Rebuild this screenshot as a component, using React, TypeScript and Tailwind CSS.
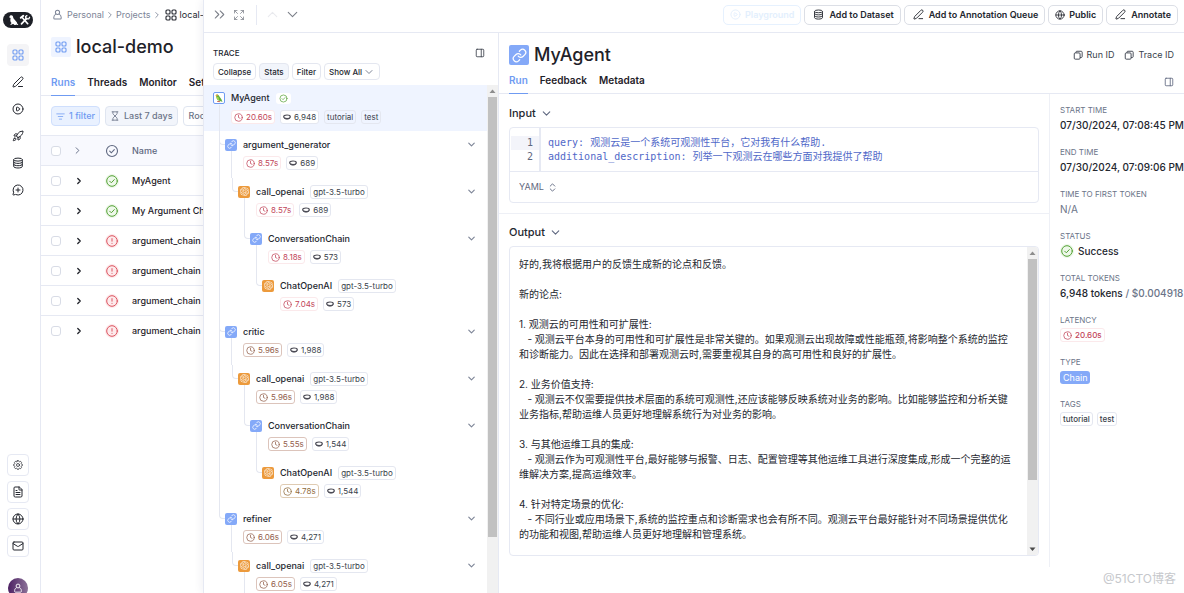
import React from 'react';
import clsx from 'clsx';
import {
  ChevronDown,
  ChevronRight,
  ChevronsRight,
  ChevronsUpDown,
  ChevronUp,
  CirclePlay,
  Clock,
  Expand,
  FileText,
  Globe,
  Hourglass,
  Link,
  ListFilter,
  Mail,
  MessageCirclePlus,
  PanelRight,
  PenLine,
  Rocket,
} from 'lucide-react';
import { HiOutlineCog8Tooth } from 'react-icons/hi2';
import { SiOpenai } from 'react-icons/si';

type LatencyTone = 'red' | 'brown' | 'amber';

interface TraceNode {
  name: string;
  kind: 'chain' | 'llm';
  model?: string;
  latency: string;
  tone: LatencyTone;
  tokens: string;
  children?: TraceNode[];
}

const TRACE: TraceNode[] = [
  {
    name: 'argument_generator', kind: 'chain', latency: '8.57s', tone: 'red', tokens: '689',
    children: [
      {
        name: 'call_openai', kind: 'llm', model: 'gpt-3.5-turbo', latency: '8.57s', tone: 'red', tokens: '689',
        children: [
          {
            name: 'ConversationChain', kind: 'chain', latency: '8.18s', tone: 'red', tokens: '573',
            children: [
              { name: 'ChatOpenAI', kind: 'llm', model: 'gpt-3.5-turbo', latency: '7.04s', tone: 'red', tokens: '573' },
            ],
          },
        ],
      },
    ],
  },
  {
    name: 'critic', kind: 'chain', latency: '5.96s', tone: 'brown', tokens: '1,988',
    children: [
      {
        name: 'call_openai', kind: 'llm', model: 'gpt-3.5-turbo', latency: '5.96s', tone: 'brown', tokens: '1,988',
        children: [
          {
            name: 'ConversationChain', kind: 'chain', latency: '5.55s', tone: 'brown', tokens: '1,544',
            children: [
              { name: 'ChatOpenAI', kind: 'llm', model: 'gpt-3.5-turbo', latency: '4.78s', tone: 'amber', tokens: '1,544' },
            ],
          },
        ],
      },
    ],
  },
  {
    name: 'refiner', kind: 'chain', latency: '6.06s', tone: 'brown', tokens: '4,271',
    children: [
      {
        name: 'call_openai', kind: 'llm', model: 'gpt-3.5-turbo', latency: '6.05s', tone: 'brown', tokens: '4,271',
        children: [
          { name: 'ConversationChain', kind: 'chain', latency: '5.71s', tone: 'brown', tokens: '2,310' },
        ],
      },
    ],
  },
];

const RUNS = [
  { name: 'MyAgent', ok: true },
  { name: 'My Argument Chain', ok: true },
  { name: 'argument_chain', ok: false },
  { name: 'argument_chain', ok: false },
  { name: 'argument_chain', ok: false },
  { name: 'argument_chain', ok: false },
];

const OUTPUT = `好的,我将根据用户的反馈生成新的论点和反馈。

新的论点:

1. 观测云的可用性和可扩展性:
   - 观测云平台本身的可用性和可扩展性是非常关键的。如果观测云出现故障或性能瓶颈,将影响整个系统的监控和诊断能力。因此在选择和部署观测云时,需要重视其自身的高可用性和良好的扩展性。

2. 业务价值支持:
   - 观测云不仅需要提供技术层面的系统可观测性,还应该能够反映系统对业务的影响。比如能够监控和分析关键业务指标,帮助运维人员更好地理解系统行为对业务的影响。

3. 与其他运维工具的集成:
   - 观测云作为可观测性平台,最好能够与报警、日志、配置管理等其他运维工具进行深度集成,形成一个完整的运维解决方案,提高运维效率。

4. 针对特定场景的优化:
   - 不同行业或应用场景下,系统的监控重点和诊断需求也会有所不同。观测云平台最好能针对不同场景提供优化的功能和视图,帮助运维人员更好地理解和管理系统。`;

/* ---------- Icons ---------- */

const PersonIcon = ({ className }: { className?: string }) => (
  <svg viewBox="0 0 12 12" fill="none" stroke="currentColor" strokeWidth="1.1" strokeLinejoin="round" className={className}>
    <circle cx="6" cy="3.6" r="2.3" />
    <path d="M4.3 5.6C2.9 6.2 2 7.5 2 9v1.2c0 .4.3.8.8.8h6.4c.5 0 .8-.4.8-.8V9c0-1.5-.9-2.8-2.3-3.4" />
  </svg>
);

const GridIcon = ({ className }: { className?: string }) => (
  <svg viewBox="0 0 12 12" fill="none" stroke="currentColor" strokeWidth="1.1" className={className}>
    <rect x="1" y="1" width="4" height="4" rx="1" />
    <rect x="7" y="1" width="4" height="4" rx="1" />
    <rect x="1" y="7" width="4" height="4" rx="1" />
    <rect x="7" y="7" width="4" height="4" rx="1" />
  </svg>
);

const DatabaseIcon = ({ className }: { className?: string }) => (
  <svg viewBox="0 0 12 12" fill="none" stroke="currentColor" className={className}>
    <ellipse cx="6" cy="2.6" rx="4.3" ry="1.5" />
    <path d="M1.700 2.600v6.900c0 .8 1.900 1.500 4.300 1.500s4.300-.7 4.300-1.500V2.600M1.700 4.900c0 .8 1.900 1.500 4.300 1.500s4.300-.7 4.300-1.500M1.700 7.200c0 .8 1.900 1.500 4.300 1.500s4.300-.7 4.300-1.500" />
  </svg>
);

const StackIcon = () => (
  <svg viewBox="0 0 12 12" fill="none" stroke="currentColor" strokeWidth="1.1" strokeLinejoin="round" className="size-[10px]">
    <rect x="1.5" y="3.5" width="7" height="7.5" rx="1.2" />
    <path d="M3.5 3.5V2.6c0-.6.5-1.1 1.1-1.1h5.3c.6 0 1.1.5 1.1 1.1v5.3c0 .6-.5 1.1-1.1 1.1H8.5" />
  </svg>
);

const TokenIcon = () => (
  <svg viewBox="0 0 8 6" fill="none" stroke="#4b4b55" className="h-[6px] w-[8px] shrink-0">
    <ellipse cx="4" cy="2.8" rx="3.3" ry="1.8" strokeWidth="1.2" />
    <path d="M1.200 4.200c.6.5 1.600.8 2.800.8s2.200-.3 2.800-.8" strokeWidth="1" />
  </svg>
);

const LogoIcon = () => (
  <svg viewBox="0 0 30 16" className="h-4 w-[30px]">
    <rect width="30" height="16" rx="8" fill="#1c1f26" />
    {/* parrot */}
    <path d="M6.500 4.500C7 3 9.200 2.800 9.900 4.200l.5 2 3.400 4c.3.500.4 1 .3 1.400l1.300.9-.9.600-1.500-.7-.3.700h-1.300l-.6-.8-1-.2-1.900.9-.6-.4 1.300-1.500C7.400 9.900 7.200 8.500 7.400 7.400L7.600 6l-1.300-.6z" fill="#fff" />
    {/* crossed tools */}
    <g stroke="#fff" strokeLinecap="round">
      <path d="M18.500 11.800l5.200-5.400" strokeWidth="1.700" />
      <path d="M19.700 6l5 5.700" strokeWidth="1.700" />
      <path d="M17.800 5.800l2.500-2" strokeWidth="2" />
      <path d="M22.800 6.500l-.2-2 1.300-.9M23.900 6.900l1.900-.1.800-1.500" strokeWidth="1.300" fill="none" />
    </g>
  </svg>
);

const ParrotIcon = () => (
  <svg viewBox="0 0 12 12" className="size-[12px] shrink-0">
    <rect x="0.5" y="0.5" width="11" height="11" rx="1.5" fill="#fff" stroke="#6f9bf2" />
    <path d="M3 3.400C3.200 2.200 5 2.100 5.600 3.200l2.800 4 1.100 2.900-2.200-1.200C5 9 3.500 7.200 3.300 5z" fill="#5fae3f" />
    <path d="M2.600 3.900c0-1.300 1.400-1.800 2.400-1l-.9 1.500z" fill="#e0a63a" />
    <path d="M3.500 5c.2 1.800 1.100 3 2.600 3.600L5.500 5z" fill="#a8d545" />
    <path d="M4.200 9.400l3 .3" stroke="#c9523d" strokeWidth=".9" />
  </svg>
);

const StatusIcon = ({ ok, className }: { ok: boolean; className?: string }) => (
  <svg
    viewBox="0 0 14 14"
    fill="none"
    strokeLinecap="round"
    strokeLinejoin="round"
    className={clsx('size-[14px] shrink-0', className)}
  >
    <circle cx="7" cy="7" r="7" fill={ok ? '#eef8ea' : '#fdeaec'} />
    <circle cx="7" cy="7" r="5.3" stroke={ok ? '#55a236' : '#dc5560'} />
    {ok ? (
      <path d="M4.700 7.200l1.600 1.600 3-3.200" stroke="#55a236" />
    ) : (
      <path d="M7 4.600v2.600M7 9.300v.1" stroke="#dc5560" />
    )}
  </svg>
);

const CheckCircle = ({ className }: { className?: string }) => (
  <svg viewBox="0 0 14 14" fill="none" stroke="currentColor" strokeWidth="1.1" strokeLinecap="round" className={className}>
    <circle cx="7" cy="7" r="5.5" />
    <path d="M4.700 7.200l1.600 1.600 3-3.200" />
  </svg>
);

const KindIcon = ({ kind }: { kind: 'chain' | 'llm' }) => (
  <span
    className={clsx(
      'flex size-[12px] shrink-0 items-center justify-center rounded-[2px] text-white',
      kind === 'chain' ? 'bg-[#84a9f8]' : 'bg-[#ec9a3c]',
    )}
  >
    {kind === 'chain' ? <Link className="size-[9px]" strokeWidth={2} /> : <SiOpenai className="size-[9px] opacity-90" />}
  </span>
);

/* ---------- Small parts ---------- */

const Chip = ({ className, children }: { className?: string; children: React.ReactNode }) => (
  <span
    className={clsx(
      'inline-flex h-[14px] shrink-0 items-center gap-[3px] rounded-[3px] border px-[2px] text-[8px] leading-[10px]',
      className ?? 'border-[#e4e7f0] text-[#3a3f4b]',
    )}
  >
    {children}
  </span>
);

const LatencyChip = ({ value, tone }: { value: string; tone: LatencyTone }) => (
  <Chip
    className={clsx(
      tone === 'red' && 'border-[#fbe9eb] bg-white text-[#c2455a]',
      tone === 'brown' && 'border-[#dcc4bb] bg-white text-[#93604c]',
      tone === 'amber' && 'border-[#dfcbb2] bg-white text-[#8f6b3c]',
    )}
  >
    <Clock className="size-[9px]" strokeWidth={2} />
    {value}
  </Chip>
);

const TokenChip = ({ value }: { value: string }) => (
  <Chip className="border-[#e4e7f0] bg-white text-[#3a3f4b]">
    <TokenIcon />
    {value}
  </Chip>
);

const Scrollbar = ({ thumb, down }: { thumb: string; down?: boolean }) => (
  <div className="flex w-[11px] shrink-0 flex-col items-center bg-[#f1f1f1]" aria-hidden="true">
    <svg viewBox="0 0 11 12" className="h-3 w-[11px] shrink-0"><path d="M2.500 8h6l-3-3.500z" fill="#8d8d8d" /></svg>
    <div className="min-h-0 w-full flex-1 px-px">
      <div className={clsx('w-full bg-[#c1c1c1]', thumb)} />
    </div>
    {down && <svg viewBox="0 0 11 12" className="h-3 w-[11px] shrink-0"><path d="M2.500 4.500h6l-3 3.500z" fill="#4a4a4a" /></svg>}
  </div>
);

/* ---------- Left side ---------- */

const NAV = [
  { label: 'Projects', icon: GridIcon },
  { label: 'Annotation queues', icon: PenLine },
  { label: 'Playground', icon: CirclePlay },
  { label: 'Deployments', icon: Rocket },
  { label: 'Datasets', icon: DatabaseIcon },
  { label: 'Prompts', icon: MessageCirclePlus },
];

const BOTTOM_NAV = [
  { label: 'Settings', icon: HiOutlineCog8Tooth },
  { label: 'Docs', icon: FileText },
  { label: 'Language', icon: Globe },
  { label: 'Contact', icon: Mail },
];

const Sidebar = () => (
  <nav className="flex w-[41px] shrink-0 flex-col border-r border-[#e6e9f3] pr-1 text-[#24272f]">
    <a href="#" aria-label="Home" className="mt-3 flex justify-center">
      <LogoIcon />
    </a>
    <div className="mt-4 flex flex-col items-center gap-[5px]">
      {NAV.map(({ label, icon: Icon }, i) => (
        <a
          key={label}
          href="#"
          aria-label={label}
          className={clsx(
            'flex size-[22px] items-center justify-center rounded-[4px]',
            i === 0 && 'bg-[#f4f4f6] text-[#6f9bf2]',
          )}
        >
          <Icon className="size-[12px]" />
        </a>
      ))}
    </div>
    <div className="mt-auto -mb-[5px] flex flex-col items-center gap-[5px]">
      {BOTTOM_NAV.map(({ label, icon: Icon }) => (
        <a
          key={label}
          href="#"
          aria-label={label}
          className="flex size-[22px] items-center justify-center rounded-[4px] border border-[#e6e9f3]"
        >
          <Icon className="size-[12px]" />
        </a>
      ))}
      <button
        aria-label="Account"
        className="mt-4 flex size-5 items-center justify-center rounded-full bg-gradient-to-r from-[#4d2063] to-[#8d7399] text-white"
      >
        <PersonIcon className="size-[10px]" />
      </button>
    </div>
  </nav>
);

const RunsPage = () => (
  <div className="w-[162px] shrink-0 overflow-hidden whitespace-nowrap text-[#1f2229]">
    <div className="flex items-center px-[11px] pt-2 text-[9px] leading-[13px] text-[#7d8597]">
      <PersonIcon className="mr-1 size-[11px] shrink-0" />
      <a href="#">Personal</a>
      <ChevronRight className="mx-px size-[10px] shrink-0" />
      <a href="#">Projects</a>
      <ChevronRight className="mx-px size-[10px] shrink-0" />
      <GridIcon className="mr-[3px] ml-[2px] size-[12px] shrink-0 text-[#24272f]" />
      <span className="text-[#24272f]">local-demo</span>
    </div>

    <div className="mt-4 flex h-5 items-center gap-[5px] px-[10px]">
      <span className="flex size-5 items-center justify-center rounded-[2px] bg-[#eff4ff] text-[#6f9bf2]">
        <GridIcon className="size-[12px]" />
      </span>
      <h1 className="text-[18px] leading-5 font-medium">local-demo</h1>
    </div>

    <div className="mt-[18px] flex gap-3 border-b border-[#e6e9f3] px-[10px] text-[10px] leading-[14px] font-semibold">
      <button className="-mb-px border-b border-[#6f9bf2] pb-[6px] text-[#6f9bf2]">Runs</button>
      <button className="pb-[6px]">Threads</button>
      <button className="pb-[6px]">Monitor</button>
      <button className="pb-[6px]">Setup</button>
    </div>

    <div className="flex gap-[5px] px-[10px] pt-[10px] pb-[9px] text-[9px] leading-3 font-medium">
      <button className="flex h-5 shrink-0 items-center gap-1 rounded-[4px] border border-[#cfdffd] bg-[#e9f1ff] px-[4px] text-[#6f9bf2]">
        <ListFilter className="size-[9px]" />1 filter
      </button>
      <button className="flex h-5 shrink-0 items-center gap-1 rounded-[4px] border border-[#dfe5f0] bg-[#f2f5fb] px-1 text-[#6b7488]">
        <Hourglass className="size-[10px]" />Last 7 days
      </button>
      <button className="flex h-5 shrink-0 items-center rounded-[4px] border border-[#dfe5f0] px-[5px] text-[#6b7488]">
        Root Runs
      </button>
    </div>

    <table className="w-[220px] table-fixed border-t border-[#e6e9f3] text-left text-[9px] leading-3">
      <thead>
        <tr className="h-[30px] border-b border-[#e6e9f3] bg-[#f8f9fe] text-[#5f6880]">
          <th className="w-[30px] pl-[10px]">
            <input type="checkbox" aria-label="Select all" className="block size-[10px] appearance-none rounded-[3px] border border-[#d8dce6] bg-white" />
          </th>
          <th className="w-[34px]"><ChevronRight className="ml-px size-[11px]" /></th>
          <th className="w-[27px]"><CheckCircle className="size-[14px]" /></th>
          <th className="font-medium">Name</th>
        </tr>
      </thead>
      <tbody>
        {RUNS.map((run, i) => (
          <tr key={i} className="h-[30px] border-b border-[#e6e9f3] last:border-b-0">
            <td className="pl-[10px]">
              <input type="checkbox" aria-label={run.name} className="block size-[10px] appearance-none rounded-[3px] border border-[#d8dce6] bg-white" />
            </td>
            <td><ChevronRight className="ml-[3px] size-[10px]" strokeWidth={3} /></td>
            <td><StatusIcon ok={run.ok} /></td>
            <td className="font-medium">{run.name}</td>
          </tr>
        ))}
      </tbody>
    </table>
  </div>
);

/* ---------- Trace panel ---------- */

const INDENT = ['pl-[12px]', 'pl-[13px]', 'pl-[12px]', 'pl-[12px]'];

const TraceTree = ({ nodes, depth = 0 }: { nodes: TraceNode[]; depth?: number }) => (
  <ul className={INDENT[depth]}>
    {nodes.map((node, i) => (
      <li key={i} className="relative">
        {/* connector */}
        <span className="absolute top-0 -left-[6px] h-[14px] w-[6px] rounded-bl-[4px] border-b border-l border-[#e4e7f0]" />
        {i < nodes.length - 1 && <span className="absolute top-0 bottom-0 -left-[6px] border-l border-[#e4e7f0]" />}
        <div className={clsx('relative', node.children ? 'h-[47px]' : 'h-[46px]')}>
          {node.children && <span className="absolute top-5 bottom-0 left-[6px] border-l border-[#e4e7f0]" />}
          <div className="flex h-[25px] items-center gap-[6px] pt-[2px] pr-[10px]">
            <KindIcon kind={node.kind} />
            <span className="text-[9px] leading-3 font-medium text-[#24272f]">{node.name}</span>
            {node.model && <Chip>{node.model}</Chip>}
            {node.children && (
              <button aria-label={`Toggle ${node.name}`} className="ml-auto text-[#7d8597]">
                <ChevronDown className="size-[11px]" strokeWidth={2.5} />
              </button>
            )}
          </div>
          <div className="flex gap-[5px] pl-[18px]">
            <LatencyChip value={node.latency} tone={node.tone} />
            <TokenChip value={node.tokens} />
          </div>
        </div>
        {node.children && <TraceTree nodes={node.children} depth={depth + 1} />}
      </li>
    ))}
  </ul>
);

const TracePanel = () => (
  <section className="flex w-[295px] shrink-0 flex-col border-r border-[#e6e9f3]">
    <div className="flex items-center justify-between pt-[14px] pr-[13px] pl-[9px]">
      <h2 className="text-[8px] leading-3 font-medium text-[#24272f]">TRACE</h2>
      <button aria-label="Toggle panel" className="text-[#3a3f4b]"><PanelRight className="size-[10px]" /></button>
    </div>
    <div className="flex gap-[3px] pt-1 pb-[5px] pl-[9px] text-[8px] leading-[10px] font-medium text-[#24272f]">
      <button className="h-[17px] rounded-[4px] border border-[#e4e7f0] px-1">Collapse</button>
      <button className="h-[17px] rounded-[4px] border border-[#e4e7f0] bg-[#f2f5fb] px-1">Stats</button>
      <button className="h-[17px] rounded-[4px] border border-[#e4e7f0] px-1">Filter</button>
      <label className="flex h-[17px] items-center rounded-[4px] border border-[#e4e7f0] px-1">
        <select aria-label="Visible runs" className="appearance-none bg-transparent">
          <option>Show All</option>
        </select>
        <ChevronDown className="size-[12px] text-[#7d8597]" />
      </label>
    </div>

    <div className="flex min-h-0 flex-1">
      <div className="min-w-0 flex-1 overflow-hidden">
        <div className="relative h-[46px] bg-[#eff4ff] pl-[9px]">
          <span className="absolute top-5 bottom-0 left-[15px] border-l border-[#e4e7f0]" />
          <div className="flex h-[25px] items-center gap-[6px] pt-px">
            <ParrotIcon />
            <span className="text-[9px] leading-3 font-medium text-[#24272f]">MyAgent</span>
            <span className="flex h-[11px] items-center rounded-[3px] bg-white px-[3px] text-[#55a236]">
              <CheckCircle className="size-[9px]" />
            </span>
          </div>
          <div className="flex gap-[5px] pl-[18px]">
            <LatencyChip value="20.60s" tone="red" />
            <TokenChip value="6,948" />
            <Chip>tutorial</Chip>
            <Chip>test</Chip>
          </div>
        </div>
        <div className="pl-[9px]">
          <TraceTree nodes={TRACE} />
        </div>
      </div>
      <Scrollbar thumb="h-[440px]" />
    </div>
  </section>
);

/* ---------- Run detail ---------- */

const Field = ({ label, children }: { label: string; children: React.ReactNode }) => (
  <div>
    <dt className="text-[8px] leading-[10px] text-[#6b7488] uppercase">{label}</dt>
    <dd className="mt-[2px] flex h-4 items-center gap-1 text-[10px] leading-4 font-medium text-[#24272f]">{children}</dd>
  </div>
);

const Details = () => (
  <dl className="flex w-[135px] shrink-0 flex-col gap-[14px] self-start overflow-hidden border-l border-[#eef0f6] pt-[11px] pb-[140px] pl-[10px] whitespace-nowrap">
    <Field label="Start time">07/30/2024, 07:08:45 PM</Field>
    <Field label="End time">07/30/2024, 07:09:06 PM</Field>
    <Field label="Time to first token"><span className="font-normal text-[#6b7488]">N/A</span></Field>
    <Field label="Status"><StatusIcon ok />Success</Field>
    <Field label="Total tokens">
      <span>6,948 tokens <span className="text-[#6b7488]">/ $0.004918</span></span>
    </Field>
    <Field label="Latency"><LatencyChip value="20.60s" tone="red" /></Field>
    <Field label="Type">
      <span className="rounded-[3px] bg-[#84a9f8] px-[3px] text-[9px] leading-[13px] font-normal text-white">Chain</span>
    </Field>
    <Field label="Tags"><Chip>tutorial</Chip><Chip>test</Chip></Field>
  </dl>
);

const SectionTitle = ({ children }: { children: React.ReactNode }) => (
  <h3 className="flex items-center gap-[4px] text-[11px] leading-4 font-medium text-[#24272f]">
    {children}
    <ChevronDown className="size-[13px] text-[#5f6880]" strokeWidth={2} />
  </h3>
);

const RunDetail = () => (
  <section className="flex min-w-0 flex-1 flex-col">
    <header className="border-b border-[#e6e9f3] pr-[10px] pl-[10px]">
      <div className="flex items-center justify-between pt-3">
        <div className="flex items-center gap-[5px]">
          <span className="flex size-5 items-center justify-center rounded-[2px] bg-[#84a9f8] text-white">
            <Link className="size-[15px]" strokeWidth={2} />
          </span>
          <h1 className="text-[18px] leading-5 font-medium text-[#1f2229]">MyAgent</h1>
        </div>
        <div className="flex gap-[10px] text-[9px] leading-3 text-[#3a3f4b]">
          <button className="flex items-center gap-1"><StackIcon />Run ID</button>
          <button className="flex items-center gap-1"><StackIcon />Trace ID</button>
        </div>
      </div>
      <div className="flex items-start pt-2 text-[10px] leading-[14px] font-semibold text-[#1f2229]">
        <button className="-mb-px border-b border-[#6f9bf2] pb-[6px] text-[#6f9bf2]">Run</button>
        <button className="ml-3">Feedback</button>
        <button className="ml-3">Metadata</button>
        <button aria-label="Toggle details" className="mt-1 ml-auto text-[#5f6880]"><PanelRight className="size-[10px]" /></button>
      </div>
    </header>

    <div className="flex min-h-0 flex-1">
      <div className="min-w-0 flex-1">
        <div className="border-b border-[#eef0f6] px-[10px] pt-[11px] pb-[10px]">
          <SectionTitle>Input</SectionTitle>
          <div className="mt-[6px] rounded-[4px] border border-[#e6e9f3]">
            <div className="flex border-b border-[#e6e9f3] font-['DejaVu_Sans_Mono','Noto_Sans_CJK_SC',monospace] text-[10px] leading-[14px]">
              <div className="w-[31px] border-r-2 border-[#e6e9f3] pt-2 pb-[7px] pl-px text-right text-[#5f6880]">
                <div className="bg-[#f3f4fa] pr-[6px]">1</div>
                <div className="pr-[6px]">2</div>
              </div>
              <div className="min-w-0 flex-1 pt-2 pl-[7px] text-[#5068c8]">
                <div>query: 观测云是一个系统可观测性平台，它对我有什么帮助.</div>
                <div>additional_description: 列举一下观测云在哪些方面对我提供了帮助</div>
              </div>
            </div>
            <label className="inline-flex h-[30px] items-center gap-[3px] pl-[9px] text-[9px] leading-3 text-[#5f6880]">
              <select aria-label="Format" className="appearance-none bg-transparent">
                <option>YAML</option>
              </select>
              <ChevronsUpDown className="size-[11px]" />
            </label>
          </div>
        </div>

        <div className="px-[10px] pt-[10px]">
          <SectionTitle>Output</SectionTitle>
          <div className="mt-[6px] flex h-[310px] overflow-hidden rounded-[4px] border border-[#e6e9f3]">
            <p className="min-w-0 flex-1 py-[10px] pr-3 pl-[9px] text-[10px] leading-[15px] whitespace-pre-wrap text-[#24272f]">
              {OUTPUT}
            </p>
            <Scrollbar thumb="h-[221px]" down />
          </div>
        </div>
      </div>
      <Details />
    </div>
  </section>
);

/* ---------- Drawer ---------- */

interface TopButtonProps {
  icon: React.ReactNode;
  disabled?: boolean;
  compact?: boolean;
  children: React.ReactNode;
}

const TopButton = ({ icon, disabled, compact, children }: TopButtonProps) => (
  <button
    disabled={disabled}
    className={clsx(
      'flex h-5 items-center rounded-[5px] border',
      compact ? 'gap-1 px-[6px]' : 'gap-[5px] pr-[6px] pl-[8px]',
      disabled ? 'border-[#e6f1fe] text-[#e3effd]' : 'border-[#dcdfe6] text-[#24272f]',
    )}
  >
    {icon}
    {children}
  </button>
);

const RunDrawer = () => (
  <main className="relative flex min-w-0 flex-1 flex-col border-l border-[#e6e9f3] bg-white shadow-[-2px_0_8px_rgba(30,40,80,0.06)]">
    <div className="flex h-[33px] shrink-0 items-center border-b border-[#e6e9f3] pr-[6px] pb-[3px] pl-[7px] text-[#7b7f88]">
      <button aria-label="Close"><ChevronsRight className="size-[17px]" strokeWidth={1.5} /></button>
      <button aria-label="Expand" className="ml-[5px]"><Expand className="size-[12px]" strokeWidth={1.5} /></button>
      <span className="mr-[7px] ml-[11px] h-5 border-l border-[#e6e9f3]" />
      <button aria-label="Previous run" disabled className="text-[#e9eaee]"><ChevronUp className="size-[17px]" strokeWidth={1.5} /></button>
      <button aria-label="Next run" className="ml-[3px]"><ChevronDown className="size-[17px]" strokeWidth={1.5} /></button>
      <div className="ml-auto flex gap-[3px] text-[9px] leading-3 font-semibold">
        <TopButton disabled compact icon={<CirclePlay className="size-[11px]" />}>Playground</TopButton>
        <TopButton icon={<DatabaseIcon className="size-[11px]" />}>Add to Dataset</TopButton>
        <TopButton icon={<PenLine className="size-[11px]" />}>Add to Annotation Queue</TopButton>
        <TopButton compact icon={<Globe className="size-[10px]" />}>Public</TopButton>
        <TopButton icon={<PenLine className="size-[11px]" />}>Annotate</TopButton>
      </div>
    </div>
    <div className="flex min-h-0 flex-1">
      <TracePanel />
      <RunDetail />
    </div>
    <span className="absolute right-2 bottom-[6px] text-[12px] leading-4 text-[#c6c8cc]">@51CTO博客</span>
  </main>
);

export default function App() {
  return (
    <div className="flex h-screen overflow-hidden bg-white font-[Inter,'Noto_Sans_CJK_SC',sans-serif]">
      <Sidebar />
      <RunsPage />
      <RunDrawer />
    </div>
  );
}
